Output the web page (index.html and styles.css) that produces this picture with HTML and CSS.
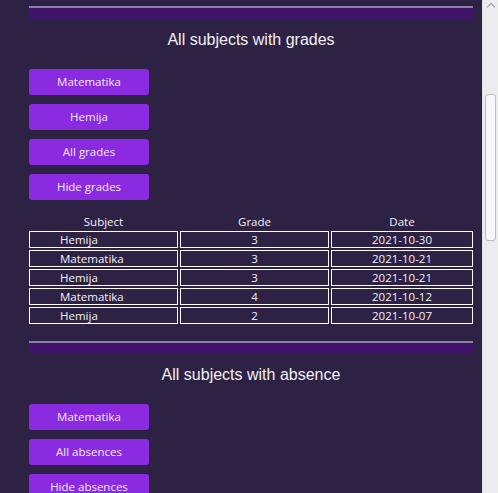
FILE: index.html
```html
<!DOCTYPE html>
<html>
<head>
<meta charset="utf-8">
<link rel="stylesheet" href="styles.css">
</head>
<body>
<div class="window">
  <main class="content">
    <section class="section first">
      <div class="rule"></div>
      <h2 class="title">All subjects with grades</h2>
      <div class="buttons">
        <button class="btn">Matematika</button>
        <button class="btn">Hemija</button>
        <button class="btn">All grades</button>
        <button class="btn">Hide grades</button>
      </div>
      <table class="grades">
        <thead>
          <tr><th class="c1">Subject</th><th class="c2">Grade</th><th class="c3">Date</th></tr>
        </thead>
        <tbody>
          <tr><td class="subj">Hemija</td><td>3</td><td>2021-10-30</td></tr>
          <tr><td class="subj">Matematika</td><td>3</td><td>2021-10-21</td></tr>
          <tr><td class="subj">Hemija</td><td>3</td><td>2021-10-21</td></tr>
          <tr><td class="subj">Matematika</td><td>4</td><td>2021-10-12</td></tr>
          <tr><td class="subj">Hemija</td><td>2</td><td>2021-10-07</td></tr>
        </tbody>
      </table>
    </section>
    <section class="section second">
      <div class="rule"></div>
      <h2 class="title">All subjects with absence</h2>
      <div class="buttons">
        <button class="btn">Matematika</button>
        <button class="btn">All absences</button>
        <button class="btn">Hide absences</button>
      </div>
    </section>
  </main>
  <div class="scrollbar">
    <div class="arrow"></div>
    <div class="track">
      <div class="thumb"></div>
    </div>
  </div>
</div>
</body>
</html>
```
FILE: styles.css
```css
html, body {
  margin: 0;
  padding: 0;
  height: 100%;
  overflow: hidden;
  background: #2d2243;
}
.window {
  display: flex;
  height: 493px;
}
.content {
  flex: 1;
  padding: 6px 0 0 29px;
  overflow: hidden;
}
.section {
  width: 444px;
}
.second {
  margin-top: 15px;
}
.rule {
  height: 11px;
  border-top: 2px solid #8e80a6;
  background: #40136a;
}
.title {
  margin: 10px 0 0 0;
  height: 22px;
  line-height: 22px;
  text-align: center;
  font-family: "Liberation Sans", Arial, sans-serif;
  font-weight: normal;
  font-size: 16px;
  color: #f2f0f5;
}
.buttons {
  display: flex;
  flex-direction: column;
  gap: 9px;
  margin-top: 18px;
}
.btn {
  width: 120px;
  height: 26px;
  padding: 0;
  border: none;
  border-radius: 3px;
  background: #8a2be2;
  color: #f3eafc;
  font-family: "Open Sans", "Noto Sans", sans-serif;
  font-size: 11.5px;
  line-height: 26px;
}
.grades {
  margin-top: 13px;
  border-spacing: 2px 2px;
  margin-left: -2px;
  width: 448px;
  font-family: "Open Sans", "Noto Sans", sans-serif;
  font-size: 11.5px;
  color: #f3f0f7;
}
.grades th {
  font-weight: normal;
  height: 14px;
  line-height: 14px;
  padding: 0;
  text-align: center;
}
.grades th.c1 { width: 149px; }
.grades th.c2 { width: 149px; }
.grades td {
  border: 1px solid #ffffff;
  height: 15px;
  line-height: 15px;
  padding: 0;
  text-align: center;
}
.grades td.subj {
  text-align: left;
  padding-left: 30px;
}
.scrollbar {
  width: 15px;
  background: #ececec;
  border-left: 1px solid #e2e2e2;
  display: flex;
  flex-direction: column;
  align-items: center;
}
.arrow {
  margin-top: 4px;
  width: 5px;
  height: 5px;
  border-left: 1px solid #9a9a9a;
  border-top: 1px solid #9a9a9a;
  transform: rotate(45deg);
}
.track {
  flex: 1;
  width: 100%;
  display: flex;
  justify-content: center;
}
.thumb {
  margin-top: 84px;
  width: 9px;
  height: 145px;
  border: 1px solid #bdbdbd;
  border-radius: 3px;
  background: #f7f7f7;
}
```
